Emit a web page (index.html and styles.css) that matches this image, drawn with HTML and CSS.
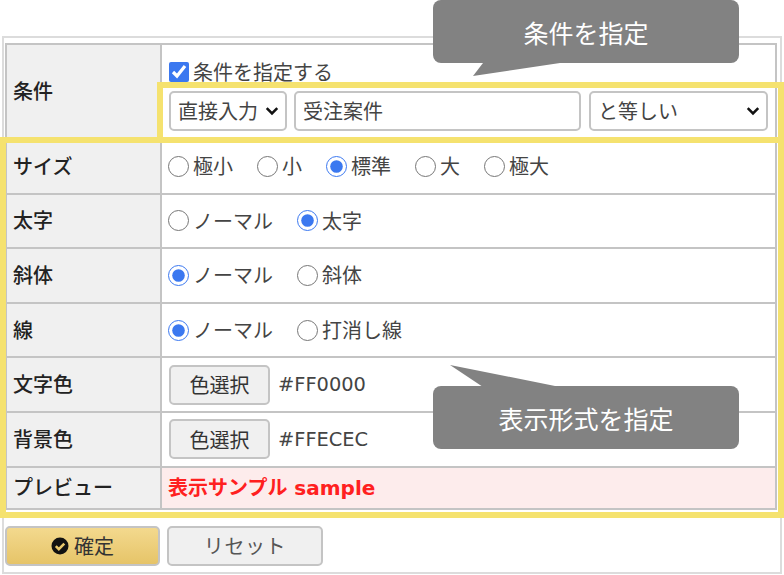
FILE: index.html
```html
<!DOCTYPE html>
<html lang="ja">
<head>
<meta charset="utf-8">
<title>条件を指定</title>
<link rel="stylesheet" href="styles.css">
</head>
<body>
<div class="page">
  <form class="panel">
    <table class="grid">
      <tr class="row-cond">
        <th>条件</th>
        <td>
          <div class="cond">
            <label class="opt opt-check"><input type="checkbox" checked>条件を指定する</label>
            <div class="cond-inputs">
              <div class="select sel-a">直接入力<svg viewBox="0 0 12 8" class="chev"><path d="M1.5 1.5 6 6l4.500-4.500"/></svg></div>
              <div class="text-input">受注案件</div>
              <div class="select sel-b">と等しい<svg viewBox="0 0 12 8" class="chev"><path d="M1.5 1.5 6 6l4.500-4.500"/></svg></div>
            </div>
          </div>
        </td>
      </tr>
      <tr class="row">
        <th>サイズ</th>
        <td><div class="opts">
          <label class="opt"><input type="radio" name="size">極小</label>
          <label class="opt"><input type="radio" name="size">小</label>
          <label class="opt"><input type="radio" name="size" checked>標準</label>
          <label class="opt"><input type="radio" name="size">大</label>
          <label class="opt"><input type="radio" name="size">極大</label>
        </div></td>
      </tr>
      <tr class="row">
        <th>太字</th>
        <td><div class="opts">
          <label class="opt"><input type="radio" name="bold">ノーマル</label>
          <label class="opt"><input type="radio" name="bold" checked>太字</label>
        </div></td>
      </tr>
      <tr class="row">
        <th>斜体</th>
        <td><div class="opts">
          <label class="opt"><input type="radio" name="italic" checked>ノーマル</label>
          <label class="opt"><input type="radio" name="italic">斜体</label>
        </div></td>
      </tr>
      <tr class="row">
        <th>線</th>
        <td><div class="opts">
          <label class="opt"><input type="radio" name="line" checked>ノーマル</label>
          <label class="opt"><input type="radio" name="line">打消し線</label>
        </div></td>
      </tr>
      <tr class="row">
        <th>文字色</th>
        <td><div class="color"><button type="button" class="btn btn-color">色選択</button><span class="hex">#FF0000</span></div></td>
      </tr>
      <tr class="row">
        <th>背景色</th>
        <td><div class="color"><button type="button" class="btn btn-color">色選択</button><span class="hex">#FFECEC</span></div></td>
      </tr>
      <tr class="row-preview">
        <th>プレビュー</th>
        <td class="preview">表示サンプル sample</td>
      </tr>
    </table>
    <div class="actions">
      <button type="button" class="btn btn-ok"><svg viewBox="0 0 18 18" class="ok-icon"><circle cx="9" cy="9" r="8.500" fill="#111"/><path d="M4.800 9.200 7.800 12.200 13.300 6.700" fill="none" stroke="#e8c76c" stroke-width="2.600"/></svg>確定</button>
      <button type="button" class="btn btn-reset">リセット</button>
    </div>
  </form>

  <div class="hl hl-cond"></div>
  <div class="hl hl-format"></div>

  <div class="bubble bubble-cond">条件を指定<svg class="tail tail-down" viewBox="0 0 87 14"><path d="M10 0 0 13 87 0z"/></svg></div>
  <div class="bubble bubble-format">表示形式を指定<svg class="tail tail-up" viewBox="0 0 110 22"><path d="M33 22 0 0 110 22z"/></svg></div>
</div>
</body>
</html>
```

FILE: styles.css
```css
* { box-sizing: border-box; }
html, body { margin: 0; padding: 0; background: #fff; }
body {
  font-family: "Noto Sans CJK JP", "Noto Sans", sans-serif;
  font-size: 20px;
  color: #333;
}
.page { position: relative; width: 784px; height: 575px; padding: 36px 2px 0; overflow: hidden; }
.panel {
  width: 780px;
  height: 538px;
  border: 2px solid #dcdcdc;
  padding: 5px 3px 0 1px;
}
.grid {
  width: 772px;
  border-collapse: collapse;
  table-layout: fixed;
}
.grid th, .grid td { border: 2px solid #c4c4c4; padding: 0; }
.grid th {
  width: 155px;
  background: #f0f0f0;
  text-align: left;
  padding: 0 0 2px 6px;
  font-weight: 500;
  color: #222;
}
.grid td { padding-left: 7px; }
.row-cond { height: 95px; }
.row { height: 54.6px; }
.row-preview { height: 42px; }

.cond { display: flex; flex-direction: column; gap: 7px; padding-top: 8px; }
.cond-inputs { display: flex; gap: 7px; }
.opts { display: flex; gap: 24px; margin-left: -1px; }
.opt { display: flex; align-items: center; gap: 4px; line-height: 24px; color: #444; }
.opt input { margin: 0; width: 21px; height: 21px; accent-color: #3b78f0; flex: none; }
.opt-check input { width: 20px; height: 20px; }

.select, .text-input {
  height: 40px;
  border: 2px solid #c4c4c4;
  border-radius: 5px;
  background: #fff;
  display: flex;
  align-items: center;
  padding: 0 0 2px 7px;
  color: #444;
}
.sel-a { width: 118px; justify-content: space-between; padding-right: 6px; }
.text-input { width: 287px; }
.sel-b { width: 179px; margin-left: 1px; justify-content: space-between; padding-right: 6px; }
.chev { width: 14px; height: 10px; margin-top: 2px; fill: none; stroke: #111; stroke-width: 2.200; }

.color { display: flex; align-items: center; gap: 8px; }
.hex { font-family: "DejaVu Sans", sans-serif; font-size: 19.400px; color: #444; }
.btn {
  font: inherit;
  height: 40px;
  border: 2px solid #c4c4c4;
  border-radius: 5px;
  background: #f0f0f0;
  color: #333;
  padding: 0;
}
.btn-color { width: 101px; }
.grid .preview {
  background: #fdecec;
  color: #ff2020;
  font-weight: 700;
  font-family: "DejaVu Sans", "Noto Sans CJK JP", sans-serif;
  padding: 0 0 2px 6px;
}

.actions { display: flex; gap: 7px; margin-top: 16px; }
.btn-ok {
  width: 155px;
  background: linear-gradient(#f3d98e, #e6c468);
  display: flex;
  align-items: center;
  justify-content: center;
  gap: 5px;
}
.ok-icon { width: 18px; height: 18px; }
.btn-reset { width: 156px; color: #555; letter-spacing: 0.600px; }

.hl { position: absolute; border: 6px solid #f5e26f; }
.hl-cond { left: 157px; top: 82px; width: 627px; height: 61px; }
.hl-format { left: 0; top: 137px; width: 784px; height: 381px; }

.bubble {
  position: absolute;
  left: 433px;
  width: 306px;
  height: 63px;
  border-radius: 8px;
  background: #828282;
  color: #fff;
  font-size: 25px;
  display: flex;
  align-items: center;
  justify-content: center;
}
.bubble-cond { top: 0; }
.bubble-format { top: 386px; }
.tail { position: absolute; fill: #828282; }
.tail-down { left: 40px; top: 63px; width: 87px; height: 14px; }
.tail-up { left: 17px; top: -21px; width: 110px; height: 22px; }
```
